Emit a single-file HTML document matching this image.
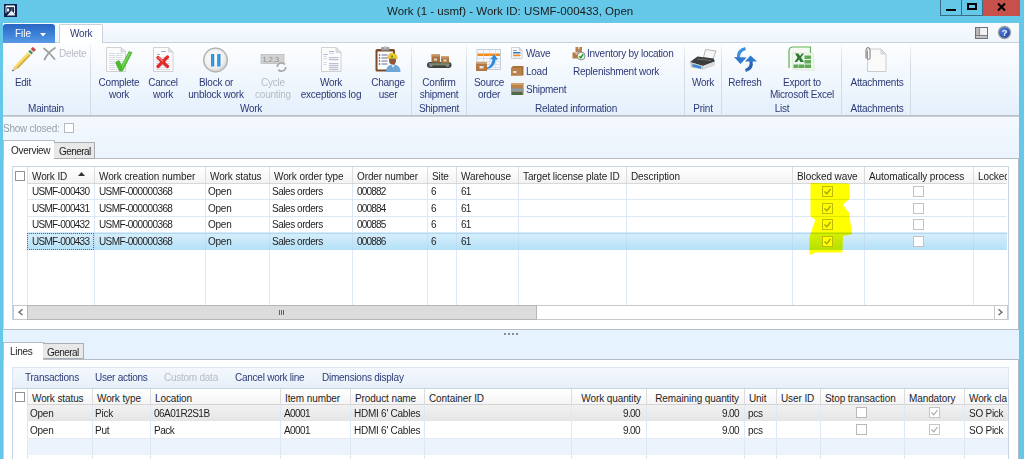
<!DOCTYPE html><html><head><meta charset="utf-8"><style>
html,body{margin:0;padding:0;}
body{width:1024px;height:459px;overflow:hidden;position:relative;background:#66c8e8;font-family:"Liberation Sans",sans-serif;font-size:10px;color:#1e1e1e;}
.t{position:absolute;white-space:nowrap;line-height:12px;letter-spacing:-0.25px;}
.rb{color:#2c3a78;}
.dis{color:#b8bcc4;}
.num{letter-spacing:-0.8px;}
svg{position:absolute;overflow:visible;}
</style></head><body>
<svg style="left:4px;top:4px" width="13" height="13" viewBox="0 0 13 13"><rect x="0" y="0" width="13" height="13" fill="#0e2150"/><path d="M2 9 V2 H10.5 V9" stroke="#dfe6ee" stroke-width="1" fill="none"/><rect x="2" y="1.8" width="8.8" height="1.4" fill="#f4f4f4"/><rect x="3" y="4.5" width="2.2" height="3" fill="#f0f4f8"/><rect x="6.8" y="4.5" width="2" height="2" fill="#fff" opacity="0.3"/><path d="M3 11.5 L7.5 6.5 L10.5 9.5 L11 11.5 Z" fill="#e8eef4"/></svg>
<div class="t" style="left:387px;top:4px;font-size:11.5px;letter-spacing:0;color:#1b1b1b;line-height:14px">Work (1 - usmf) - Work ID: USMF-000433, Open</div>
<div style="position:absolute;left:940px;top:0px;width:22px;height:16px;box-sizing:border-box;border:1px solid #3a6e86;border-top:none;background:#66c8e8"></div>
<div style="position:absolute;left:946px;top:9px;width:10px;height:2px;background:#000"></div>
<div style="position:absolute;left:962px;top:0px;width:21px;height:16px;box-sizing:border-box;border:1px solid #3a6e86;border-top:none;border-left:none;background:#66c8e8"></div>
<div style="position:absolute;left:967px;top:3px;width:10px;height:7px;box-sizing:border-box;border:2px solid #000"></div>
<div style="position:absolute;left:983px;top:0px;width:37px;height:16px;background:#c7504a"></div>
<svg style="left:997px;top:3px" width="9" height="8" viewBox="0 0 9 8"><path d="M1 0.5 L8 7.5 M8 0.5 L1 7.5" stroke="#000" stroke-width="2"/></svg>
<div style="position:absolute;left:3px;top:23px;width:1016px;height:436px;background:#e6f2fd"></div>
<div style="position:absolute;left:3px;top:23px;width:1016px;height:19px;background:linear-gradient(#f8fbff,#eef5fc)"></div>
<div style="position:absolute;left:3px;top:42px;width:1016px;height:1px;background:#c9d1da"></div>
<div style="position:absolute;left:3px;top:24px;width:52px;height:19px;background:linear-gradient(#2a66c2,#3a7fd6 50%,#5a9ae6);border-radius:3px 3px 0 0"></div>
<div class="t" style="left:15px;top:28px;color:#fff;font-size:10px;letter-spacing:0">File</div>
<svg style="left:40px;top:33px" width="6" height="3.5" viewBox="0 0 6 3.5"><path d="M0 0 L6 0 L3 3.5 Z" fill="#fff"/></svg>
<div style="position:absolute;left:59px;top:24px;width:44px;height:20px;box-sizing:border-box;background:#fff;border:1px solid #c9d1da;border-bottom:none;border-radius:2px 2px 0 0"></div>
<div class="t" style="left:70px;top:28px;font-size:10px;letter-spacing:-0.2px;color:#2c3a78">Work</div>
<svg style="left:0;top:0" width="1024" height="459"><rect x="975.5" y="27.5" width="12" height="11" fill="#f2f2f2" stroke="#6e7276" stroke-width="1"/><rect x="976" y="28" width="3" height="7" fill="#b8b8b8"/><rect x="979" y="28" width="0.8" height="7" fill="#6e7276"/><rect x="976" y="35" width="11" height="0.9" fill="#6e7276"/><rect x="976" y="36" width="11" height="2" fill="#c4c4c4"/></svg>
<svg style="left:998px;top:26px" width="13" height="13" viewBox="0 0 13 13"><defs><radialGradient id="hg" cx="0.4" cy="0.35" r="0.7"><stop offset="0" stop-color="#5a8ae8"/><stop offset="1" stop-color="#1a3a9a"/></radialGradient></defs><circle cx="6.5" cy="6.5" r="6" fill="url(#hg)" stroke="#9a9ea4" stroke-width="1.3"/><text x="6.6" y="10" font-size="9.5" font-weight="bold" text-anchor="middle" fill="#f0f4ff" font-family="Liberation Sans">?</text></svg>
<div style="position:absolute;left:3px;top:43px;width:1016px;height:72px;background:linear-gradient(#fdfeff,#f3f8fd 40%,#e4f0fc)"></div>
<div style="position:absolute;left:3px;top:115px;width:1016px;height:2px;background:linear-gradient(#b4b9be,#cfd5db)"></div>
<div style="position:absolute;left:90px;top:44px;width:1px;height:71px;background:linear-gradient(rgba(210,220,230,0.2),#d3dbe4 30%,#d3dbe4)"></div>
<div style="position:absolute;left:411px;top:44px;width:1px;height:71px;background:linear-gradient(rgba(210,220,230,0.2),#d3dbe4 30%,#d3dbe4)"></div>
<div style="position:absolute;left:466px;top:44px;width:1px;height:71px;background:linear-gradient(rgba(210,220,230,0.2),#d3dbe4 30%,#d3dbe4)"></div>
<div style="position:absolute;left:684px;top:44px;width:1px;height:71px;background:linear-gradient(rgba(210,220,230,0.2),#d3dbe4 30%,#d3dbe4)"></div>
<div style="position:absolute;left:721px;top:44px;width:1px;height:71px;background:linear-gradient(rgba(210,220,230,0.2),#d3dbe4 30%,#d3dbe4)"></div>
<div style="position:absolute;left:841px;top:44px;width:1px;height:71px;background:linear-gradient(rgba(210,220,230,0.2),#d3dbe4 30%,#d3dbe4)"></div>
<div style="position:absolute;left:910px;top:44px;width:1px;height:71px;background:linear-gradient(rgba(210,220,230,0.2),#d3dbe4 30%,#d3dbe4)"></div>
<div class="t rb" style="left:-77px;top:77px;width:200px;text-align:center">Edit</div>
<div class="t" style="left:59px;top:48px;color:#b8bcc4">Delete</div>
<div class="t rb" style="left:-54px;top:103px;width:200px;text-align:center">Maintain</div>
<div class="t rb" style="left:19px;top:77px;width:200px;text-align:center">Complete</div>
<div class="t rb" style="left:19px;top:89px;width:200px;text-align:center">work</div>
<div class="t rb" style="left:63px;top:77px;width:200px;text-align:center">Cancel</div>
<div class="t rb" style="left:63px;top:89px;width:200px;text-align:center">work</div>
<div class="t rb" style="left:116px;top:77px;width:200px;text-align:center">Block or</div>
<div class="t rb" style="left:116px;top:89px;width:200px;text-align:center">unblock work</div>
<div class="t dis" style="left:173px;top:77px;width:200px;text-align:center">Cycle</div>
<div class="t dis" style="left:173px;top:89px;width:200px;text-align:center">counting</div>
<div class="t rb" style="left:231px;top:77px;width:200px;text-align:center">Work</div>
<div class="t rb" style="left:231px;top:89px;width:200px;text-align:center">exceptions log</div>
<div class="t rb" style="left:288px;top:77px;width:200px;text-align:center">Change</div>
<div class="t rb" style="left:288px;top:89px;width:200px;text-align:center">user</div>
<div class="t rb" style="left:151px;top:103px;width:200px;text-align:center">Work</div>
<div class="t rb" style="left:339px;top:77px;width:200px;text-align:center">Confirm</div>
<div class="t rb" style="left:339px;top:89px;width:200px;text-align:center">shipment</div>
<div class="t rb" style="left:339px;top:103px;width:200px;text-align:center">Shipment</div>
<div class="t rb" style="left:389px;top:77px;width:200px;text-align:center">Source</div>
<div class="t rb" style="left:389px;top:89px;width:200px;text-align:center">order</div>
<div class="t" style="left:526px;top:48px;color:#2c3a78">Wave</div>
<div class="t" style="left:526px;top:66px;color:#2c3a78">Load</div>
<div class="t" style="left:526px;top:84px;color:#2c3a78">Shipment</div>
<div class="t" style="left:587px;top:48px;color:#2c3a78">Inventory by location</div>
<div class="t" style="left:573px;top:66px;color:#2c3a78">Replenishment work</div>
<div class="t rb" style="left:476px;top:103px;width:200px;text-align:center">Related information</div>
<div class="t rb" style="left:603px;top:77px;width:200px;text-align:center">Work</div>
<div class="t rb" style="left:603px;top:103px;width:200px;text-align:center">Print</div>
<div class="t rb" style="left:645px;top:77px;width:200px;text-align:center">Refresh</div>
<div class="t rb" style="left:702px;top:77px;width:200px;text-align:center">Export to</div>
<div class="t rb" style="left:702px;top:89px;width:200px;text-align:center">Microsoft Excel</div>
<div class="t rb" style="left:682px;top:103px;width:200px;text-align:center">List</div>
<div class="t rb" style="left:777px;top:77px;width:200px;text-align:center">Attachments</div>
<div class="t rb" style="left:777px;top:103px;width:200px;text-align:center">Attachments</div>
<svg style="left:0;top:0" width="1024" height="459" viewBox="0 0 1024 459"><g transform="translate(12,71.5) rotate(-46) scale(0.93,0.9)">
 <path d="M0 0 L6.5 -2.4 L6.5 2.4 Z" fill="#e9c98f"/>
 <path d="M0 0 L2.2 -0.8 L2.2 0.8 Z" fill="#3a3a3a"/>
 <rect x="6.5" y="-2.4" width="20" height="4.8" fill="#f3d762"/>
 <rect x="6.5" y="0.6" width="20" height="1.8" fill="#d9ab40"/>
 <rect x="6.5" y="-2.4" width="20" height="0.8" fill="#fff3b0"/>
 <rect x="26.5" y="-2.4" width="1.2" height="4.8" fill="#eee"/>
 <rect x="27.7" y="-2.4" width="2.6" height="4.8" fill="#3f8f48"/>
 <rect x="30.3" y="-2.4" width="1" height="4.8" fill="#eee"/>
 <rect x="31.3" y="-2.5" width="3.4" height="5" rx="1.2" fill="#c9474a"/>
</g><path d="M44 48.5 Q49.5 52.5 54.5 59" stroke="#a0a0a0" stroke-width="1.8" fill="none" stroke-linecap="round"/><path d="M55 48 Q48.5 51.5 44.5 59.5" stroke="#a0a0a0" stroke-width="1.8" fill="none" stroke-linecap="round"/><path d="M107.5 49.0 L121.0 48.0 L125.5 52.0 L125.5 72.0 L107.5 72.0 Z" fill="#d8d8d8" opacity="0.6"/><path d="M106.5 47.5 L121.0 47.5 L125.5 52.0 L125.5 71.5 L106.5 71.5 Z" fill="#fbfbfb" stroke="#c6c6c6" stroke-width="0.8"/><path d="M121.0 47.5 L121.0 52.0 L125.5 52.0 Z" fill="#e2e2e2" stroke="#c6c6c6" stroke-width="0.6"/><rect x="109" y="53" width="6" height="0.9" fill="#d6dae2"/><rect x="116" y="53" width="7" height="0.9" fill="#d6dae2"/><rect x="109" y="55" width="6" height="0.9" fill="#d6dae2"/><rect x="116" y="55" width="7" height="0.9" fill="#d6dae2"/><rect x="109" y="57" width="6" height="0.9" fill="#d6dae2"/><rect x="116" y="57" width="7" height="0.9" fill="#d6dae2"/><rect x="109" y="59" width="6" height="0.9" fill="#d6dae2"/><rect x="116" y="59" width="7" height="0.9" fill="#d6dae2"/><rect x="109" y="61" width="6" height="0.9" fill="#d6dae2"/><rect x="116" y="61" width="7" height="0.9" fill="#d6dae2"/><rect x="109" y="63" width="6" height="0.9" fill="#d6dae2"/><rect x="116" y="63" width="7" height="0.9" fill="#d6dae2"/><rect x="109" y="65" width="6" height="0.9" fill="#d6dae2"/><rect x="116" y="65" width="7" height="0.9" fill="#d6dae2"/><rect x="109" y="67" width="6" height="0.9" fill="#d6dae2"/><rect x="116" y="67" width="7" height="0.9" fill="#d6dae2"/><rect x="109" y="69" width="6" height="0.9" fill="#d6dae2"/><rect x="116" y="69" width="7" height="0.9" fill="#d6dae2"/><path d="M115.5 62.5 L119 60.5 L121.5 65.5 L129 51.5 L132 52.5 L122.5 71 L119.5 71 Z" fill="#4cbb2c" stroke="#2f9a1c" stroke-width="0.5"/><path d="M121.8 66 L129.2 52.3 L130.8 52.8 L122.3 68.5 Z" fill="#8fe06a" opacity="0.7"/><path d="M154.5 49.0 L168.5 48.0 L173.0 52.0 L173.0 72.0 L154.5 72.0 Z" fill="#d8d8d8" opacity="0.6"/><path d="M153.5 47.5 L168.5 47.5 L173.0 52.0 L173.0 71.5 L153.5 71.5 Z" fill="#fbfbfb" stroke="#c6c6c6" stroke-width="0.8"/><path d="M168.5 47.5 L168.5 52.0 L173.0 52.0 Z" fill="#e2e2e2" stroke="#c6c6c6" stroke-width="0.6"/><rect x="161" y="51" width="5" height="1" fill="#9aaedc"/><rect x="157" y="54" width="3" height="1" fill="#9aaedc"/><rect x="156" y="57" width="14" height="0.8" fill="#d0d6e0"/><rect x="156" y="59" width="14" height="0.8" fill="#d0d6e0"/><rect x="156" y="61" width="14" height="0.8" fill="#d0d6e0"/><rect x="156" y="63" width="14" height="0.8" fill="#d0d6e0"/><rect x="156" y="65" width="14" height="0.8" fill="#d0d6e0"/><rect x="156" y="67" width="14" height="0.8" fill="#d0d6e0"/><rect x="156" y="69" width="14" height="0.8" fill="#d0d6e0"/><path d="M158 57.5 L167.5 66.5 M167.5 57 L158 66.5" stroke="#e12b2b" stroke-width="3.2" stroke-linecap="round"/><path d="M158.5 57.5 L162.5 61" stroke="#f47a7a" stroke-width="1.2" stroke-linecap="round"/><defs><radialGradient id="gb" cx="0.45" cy="0.4" r="0.6"><stop offset="0" stop-color="#ffffff"/><stop offset="0.75" stop-color="#f0f0f0"/><stop offset="1" stop-color="#d4d4d4"/></radialGradient><linearGradient id="bl" x1="0" y1="0" x2="1" y2="0"><stop offset="0" stop-color="#1f7fd0"/><stop offset="0.5" stop-color="#3aa8f0"/><stop offset="1" stop-color="#1a6ec0"/></linearGradient></defs><circle cx="215.5" cy="60" r="12.5" fill="#c4c4c4"/><circle cx="215.5" cy="60" r="11" fill="url(#gb)"/><circle cx="215.5" cy="60" r="12" fill="none" stroke="#ababab" stroke-width="0.8"/><rect x="211" y="54" width="3.2" height="12.5" fill="url(#bl)"/><rect x="217.2" y="54" width="3.2" height="12.5" fill="url(#bl)"/><rect x="261" y="54.5" width="23" height="9" fill="#d2d2d2" stroke="#bdbdbd" stroke-width="0.8"/><text x="262.5" y="62" font-size="7.5" fill="#8a8a8a" font-family="Liberation Sans">1,2,3</text><circle cx="281.5" cy="67" r="4.2" fill="none" stroke="#a9a9a9" stroke-width="1.8" stroke-dasharray="10 3"/><path d="M322.5 49.0 L336.0 48.0 L341.0 52.5 L341.0 72.0 L322.5 72.0 Z" fill="#d8d8d8" opacity="0.6"/><path d="M321.5 47.5 L336.0 47.5 L341.0 52.5 L341.0 71.5 L321.5 71.5 Z" fill="#fbfbfb" stroke="#c6c6c6" stroke-width="0.8"/><path d="M336.0 47.5 L336.0 52.5 L341.0 52.5 Z" fill="#e2e2e2" stroke="#c6c6c6" stroke-width="0.6"/><rect x="329" y="51" width="5" height="1" fill="#a8b4d8"/><rect x="329" y="53" width="5" height="0.8" fill="#c8cce0"/><rect x="323.5" y="54" width="4" height="1" fill="#a8b4d8"/><rect x="323.5" y="56" width="3" height="0.8" fill="#c8cce0"/><rect x="323.5" y="58" width="3" height="0.8" fill="#c8cce0"/><rect x="323.5" y="62" width="3" height="0.8" fill="#c8cce0"/><rect x="323.5" y="64" width="3" height="0.8" fill="#c8cce0"/><rect x="329" y="57" width="9.5" height="1.2" fill="#b8c0d4"/><rect x="329" y="59" width="9.5" height="1.2" fill="#b8c0d4"/><rect x="329" y="63" width="9.5" height="1.2" fill="#b8c0d4"/><rect x="329" y="65" width="9.5" height="1.2" fill="#b8c0d4"/><rect x="329" y="67" width="9.5" height="1.2" fill="#b8c0d4"/><rect x="329" y="69" width="9.5" height="1.2" fill="#b8c0d4"/><rect x="375.5" y="49" width="19.5" height="22.5" rx="1.5" fill="#7a4a28"/><rect x="377.5" y="51.5" width="15.5" height="18" fill="#fdfdfd"/><rect x="381" y="47" width="8.5" height="3.5" rx="1" fill="#9c9c9c"/><circle cx="385.3" cy="47.5" r="1.5" fill="#bdbdbd"/><circle cx="379.5" cy="55" r="0.8" fill="#444"/><rect x="381.5" y="54.5" width="6" height="1" fill="#6a6a9a"/><circle cx="379.5" cy="58" r="0.8" fill="#444"/><rect x="381.5" y="57.5" width="6" height="1" fill="#6a6a9a"/><circle cx="379.5" cy="61" r="0.8" fill="#444"/><rect x="381.5" y="60.5" width="6" height="1" fill="#6a6a9a"/><circle cx="379.5" cy="64" r="0.8" fill="#444"/><rect x="381.5" y="63.5" width="6" height="1" fill="#6a6a9a"/><path d="M386 72 Q386 64.5 393 64.5 Q400.5 64.5 400.5 72 Z" fill="#6ea6d8"/><path d="M391 64.5 L393 68 L395 64.5 Z" fill="#dde8f0"/><ellipse cx="392.5" cy="60.5" rx="3.5" ry="4" fill="#8b5a3a"/><path d="M387.8 58.5 Q388 53.2 392.5 53.2 Q397 53.2 397.2 58.5 Z" fill="#f2cc2a" stroke="#c9a010" stroke-width="0.5"/><circle cx="392" cy="56.5" r="1.2" fill="#5aa040"/><rect x="427" y="62" width="24.5" height="6" rx="3" fill="#3e4440"/><rect x="429" y="63.2" width="20.5" height="2.2" fill="#7a8a6a"/><circle cx="431" cy="65.5" r="1.6" fill="#888"/><circle cx="447.5" cy="65.5" r="1.6" fill="#888"/><rect x="431.5" y="54.5" width="8.5" height="8" fill="#a8743e"/><rect x="431.5" y="54.5" width="8.5" height="2" fill="#c8925a"/><rect x="434" y="58.5" width="3" height="2" fill="#e0d8c8"/><rect x="441" y="56.5" width="8" height="6.5" fill="#a8743e"/><rect x="441" y="56.5" width="8" height="2" fill="#c8925a"/><rect x="443.5" y="59.5" width="3" height="2" fill="#e0d8c8"/><rect x="477" y="49.5" width="23.5" height="20" fill="#f4f6fa" stroke="#b8c4d4" stroke-width="0.8"/><rect x="477.5" y="53.5" width="22.5" height="2.5" fill="#f08a1c"/><rect x="478" y="58" width="22" height="0.6" fill="#c8d4e4"/><rect x="478" y="61" width="22" height="0.6" fill="#c8d4e4"/><rect x="478" y="64" width="22" height="0.6" fill="#c8d4e4"/><rect x="478" y="67" width="22" height="0.6" fill="#c8d4e4"/><rect x="483" y="50" width="0.6" height="19" fill="#c8d4e4"/><rect x="489" y="50" width="0.6" height="19" fill="#c8d4e4"/><rect x="495" y="50" width="0.6" height="19" fill="#c8d4e4"/><path d="M486 68 Q492 66 492.5 59 L490 59.5 L494.5 54.5 L498 60 L495.5 59.5 Q495 68 486 69.5 Z" fill="#2a8ae0"/><rect x="476" y="62" width="11" height="9" fill="#b27a42"/><rect x="476" y="62" width="11" height="2" fill="#caa070"/><rect x="479.5" y="66" width="4" height="2.5" fill="#e6e2da"/><path d="M512.5 49.0 L519.0 48.0 L522.0 50.5 L522.0 59.0 L512.5 59.0 Z" fill="#d8d8d8" opacity="0.6"/><path d="M511.5 47.5 L519.0 47.5 L522.0 50.5 L522.0 58.5 L511.5 58.5 Z" fill="#fbfbfb" stroke="#c6c6c6" stroke-width="0.8"/><path d="M519.0 47.5 L519.0 50.5 L522.0 50.5 Z" fill="#e2e2e2" stroke="#c6c6c6" stroke-width="0.6"/><rect x="513" y="52" width="7.5" height="1.5" fill="#3a7ad0"/><rect x="513" y="54.5" width="7.5" height="1.5" fill="#f0902a"/><rect x="513" y="50" width="4" height="1" fill="#8aa8d8"/><rect x="513" y="56.5" width="7" height="0.8" fill="#c8c8c8"/><path d="M511 68 L513 66 L523.5 66 L523.5 75.5 L511 75.5 Z" fill="#a8703a"/><rect x="511" y="68" width="10.5" height="7.5" fill="#b8824a"/><rect x="513" y="71" width="3.5" height="2" fill="#e6e0d4"/><rect x="511" y="83" width="12.5" height="12" fill="#b8824a"/><rect x="511" y="83" width="12.5" height="2" fill="#d0a06a"/><rect x="511" y="88.5" width="12.5" height="3" fill="#8a9aa8"/><rect x="512" y="92" width="10.5" height="3" fill="#4a6a48"/><rect x="575.5" y="47" width="6.5" height="5.2" fill="#b8824a"/><rect x="578" y="47" width="1.5" height="2" fill="#e6d8c0"/><rect x="577.5" y="50" width="2.5" height="1" fill="#8a9aa8"/><rect x="572.5" y="52.5" width="8.5" height="6" fill="#b27a42"/><rect x="575.5" y="52.5" width="1.5" height="2" fill="#e6d8c0"/><circle cx="581.2" cy="56" r="3.9" fill="#f4f4f4" stroke="#8a8a8a" stroke-width="1"/><path d="M579.3 56.2 L580.8 57.8 L583.2 54.2" stroke="#22aa22" stroke-width="1.6" fill="none"/><path d="M703.5 57.5 L705.5 49.5 L716 51 L713 59 Z" fill="#f7f7f7" stroke="#9a9a9a" stroke-width="0.7"/><path d="M690 62 L697.5 56.5 L713.5 58.5 L715 61.5 L703 66 Z" fill="#3c3c3c"/><path d="M697 59 L711 60.5" stroke="#777" stroke-width="0.8"/><path d="M690 62 L703 66 L715 61.5 L714.5 65.5 L703 69.5 L691 67.5 Z" fill="#c4c4c4"/><path d="M703 66 L715 61.5 L714.5 65.5 L703 69.5 Z" fill="#dcdcdc"/><path d="M692.5 64 L701 66.3 L701 68.8 L692.5 66.8 Z" fill="#3a8ad8"/><path d="M745.5 48.5 Q738 50.5 738.5 57.5" stroke="#3b8fdc" stroke-width="3.2" fill="none"/><path d="M734 57 L746.5 57.5 L740.5 64 Z" fill="#2f78cc"/><path d="M745.5 70.5 Q752.5 68.5 751 61" stroke="#2a62b8" stroke-width="3.2" fill="none"/><path d="M745 61.5 L750.5 55.5 L757 61.5 Z" fill="#2f78cc"/><path d="M789 68 L789 51 Q789 47 793 47 L810.5 47 L810.5 53" stroke="#62b454" stroke-width="1.2" fill="#f4faf2"/><path d="M792.5 52.5 L813.5 53.5 L814.5 70.5 L792.5 69.5 Z" fill="#eef6ec" stroke="#d8e4d8" stroke-width="0.6"/><rect x="804.5" y="55.5" width="6.5" height="3.5" fill="#4fa246" opacity="0.9"/><rect x="804.5" y="60" width="6.5" height="3.5" fill="#4fa246" opacity="0.9"/><rect x="804.5" y="64.5" width="6.5" height="3.5" fill="#4fa246" opacity="0.9"/><rect x="793.5" y="64.5" width="5" height="3.5" fill="#4fa246" opacity="0.9"/><rect x="799" y="64.5" width="5" height="3.5" fill="#4fa246" opacity="0.9"/><path d="M795 53.5 L798.5 53.5 L800 56 L802 53.5 L804 53.5 L801 57.5 L804 62 L800.5 62 L799 59.5 L797 62 L794.5 62 L797.5 57.5 Z" fill="#2a7a30"/><path d="M868.5 50.5 L881.0 49.5 L886.0 54 L886.0 72.0 L868.5 72.0 Z" fill="#d8d8d8" opacity="0.6"/><path d="M867.5 49 L881.0 49 L886.0 54 L886.0 71.5 L867.5 71.5 Z" fill="#fafafa" stroke="#c2c2c2" stroke-width="0.8"/><path d="M881.0 49 L881.0 54 L886.0 54 Z" fill="#e2e2e2" stroke="#c2c2c2" stroke-width="0.6"/><path d="M866 58.5 L866 50 Q866 47.5 868 47.5 Q870 47.5 870 50 L870 58 Q870 59.5 868.5 59.5 Q867.2 59.5 867.2 58 L867.2 51" stroke="#7a7a7a" stroke-width="1" fill="none"/></svg>
<div style="position:absolute;left:3px;top:117px;width:1016px;height:41px;background:linear-gradient(#f3f8fd,#ebf4fd)"></div>
<div class="t" style="left:3px;top:123px;color:#9aa0a8">Show closed:</div>
<div style="position:absolute;left:64px;top:123px;width:10px;height:10px;box-sizing:border-box;border:1px solid #b4b9bf;background:#fff"></div>
<div style="position:absolute;left:3px;top:158px;width:1016px;height:172px;box-sizing:border-box;background:#fff;border:1px solid #b6bcc4;border-left-color:#c8ced4"></div>
<div style="position:absolute;left:3px;top:140px;width:52px;height:19px;box-sizing:border-box;background:#fff;border:1px solid #b6bcc4;border-bottom:none"></div>
<div class="t" style="left:11px;top:145px;letter-spacing:-0.3px">Overview</div>
<div style="position:absolute;left:54px;top:142px;width:41px;height:17px;box-sizing:border-box;background:#e8e8e8;border:1px solid #a9aeb4;border-left:none"></div>
<div class="t" style="left:59px;top:146px;letter-spacing:-0.55px">General</div>
<div style="position:absolute;left:12px;top:166px;width:997px;height:154px;box-sizing:border-box;border:1px solid #c9d5e2;background:#fff"></div>
<div style="position:absolute;left:27px;top:167px;width:980px;height:16px;background:linear-gradient(#ffffff,#f3f3f3);border-bottom:1px solid #d8d8d8"></div>
<div style="position:absolute;left:15px;top:171px;width:10px;height:10px;box-sizing:border-box;border:1px solid #8e9399;background:#fff"></div>
<div style="position:absolute;left:27px;top:233px;width:980px;height:17px;background:linear-gradient(#d6edfa,#b4e1f8);border-top:1px solid #abdcf6;box-sizing:border-box"></div>
<div style="position:absolute;left:27px;top:167px;width:1px;height:16px;background:#dcdcdc"></div>
<div style="position:absolute;left:27px;top:183px;width:1px;height:122px;background:rgba(190,210,235,0.5)"></div>
<div style="position:absolute;left:94px;top:167px;width:1px;height:16px;background:#dcdcdc"></div>
<div style="position:absolute;left:94px;top:183px;width:1px;height:122px;background:rgba(190,210,235,0.5)"></div>
<div style="position:absolute;left:205px;top:167px;width:1px;height:16px;background:#dcdcdc"></div>
<div style="position:absolute;left:205px;top:183px;width:1px;height:122px;background:rgba(190,210,235,0.5)"></div>
<div style="position:absolute;left:269px;top:167px;width:1px;height:16px;background:#dcdcdc"></div>
<div style="position:absolute;left:269px;top:183px;width:1px;height:122px;background:rgba(190,210,235,0.5)"></div>
<div style="position:absolute;left:352px;top:167px;width:1px;height:16px;background:#dcdcdc"></div>
<div style="position:absolute;left:352px;top:183px;width:1px;height:122px;background:rgba(190,210,235,0.5)"></div>
<div style="position:absolute;left:427px;top:167px;width:1px;height:16px;background:#dcdcdc"></div>
<div style="position:absolute;left:427px;top:183px;width:1px;height:122px;background:rgba(190,210,235,0.5)"></div>
<div style="position:absolute;left:456px;top:167px;width:1px;height:16px;background:#dcdcdc"></div>
<div style="position:absolute;left:456px;top:183px;width:1px;height:122px;background:rgba(190,210,235,0.5)"></div>
<div style="position:absolute;left:518px;top:167px;width:1px;height:16px;background:#dcdcdc"></div>
<div style="position:absolute;left:518px;top:183px;width:1px;height:122px;background:rgba(190,210,235,0.5)"></div>
<div style="position:absolute;left:626px;top:167px;width:1px;height:16px;background:#dcdcdc"></div>
<div style="position:absolute;left:626px;top:183px;width:1px;height:122px;background:rgba(190,210,235,0.5)"></div>
<div style="position:absolute;left:792px;top:167px;width:1px;height:16px;background:#dcdcdc"></div>
<div style="position:absolute;left:792px;top:183px;width:1px;height:122px;background:rgba(190,210,235,0.5)"></div>
<div style="position:absolute;left:864px;top:167px;width:1px;height:16px;background:#dcdcdc"></div>
<div style="position:absolute;left:864px;top:183px;width:1px;height:122px;background:rgba(190,210,235,0.5)"></div>
<div style="position:absolute;left:973px;top:167px;width:1px;height:16px;background:#dcdcdc"></div>
<div style="position:absolute;left:973px;top:183px;width:1px;height:122px;background:rgba(190,210,235,0.5)"></div>
<div class="t" style="left:32px;top:171px;letter-spacing:-0.1px">Work ID</div>
<div class="t" style="left:99px;top:171px;letter-spacing:-0.1px">Work creation number</div>
<div class="t" style="left:210px;top:171px;letter-spacing:-0.1px">Work status</div>
<div class="t" style="left:274px;top:171px;letter-spacing:-0.1px">Work order type</div>
<div class="t" style="left:357px;top:171px;letter-spacing:-0.1px">Order number</div>
<div class="t" style="left:432px;top:171px;letter-spacing:-0.1px">Site</div>
<div class="t" style="left:461px;top:171px;letter-spacing:-0.1px">Warehouse</div>
<div class="t" style="left:523px;top:171px;letter-spacing:-0.1px">Target license plate ID</div>
<div class="t" style="left:631px;top:171px;letter-spacing:-0.1px">Description</div>
<div class="t" style="left:797px;top:171px;letter-spacing:-0.1px">Blocked wave</div>
<div class="t" style="left:869px;top:171px;letter-spacing:-0.1px">Automatically process</div>
<div class="t" style="left:978px;top:171px;letter-spacing:-0.1px;width:29px;overflow:hidden">Locked</div>
<svg style="left:78px;top:172px" width="7" height="4" viewBox="0 0 7 4"><path d="M0 4 L7 4 L3.5 0 Z" fill="#333"/></svg>
<div style="position:absolute;left:27px;top:199px;width:980px;height:1px;background:#dde8f5"></div>
<div class="t" style="left:32px;top:186px;letter-spacing:-0.7px">USMF-000430</div>
<div class="t" style="left:208px;top:186px;">Open</div>
<div class="t" style="left:272px;top:186px;letter-spacing:-0.45px">Sales orders</div>
<div class="t" style="left:357px;top:186px;letter-spacing:-0.8px">000882</div>
<div class="t" style="left:431px;top:186px;">6</div>
<div class="t" style="left:461px;top:186px;letter-spacing:-0.8px">61</div>
<div class="t" style="left:99px;top:186px;letter-spacing:-0.6px">USMF-000000368</div>
<div style="position:absolute;left:822px;top:186px;width:11px;height:11px;box-sizing:border-box;border:1px solid #bcbcbc;background:#fff"></div>
<svg style="left:824px;top:188px" width="7" height="7" viewBox="0 0 7 7"><path d="M0.5 3.5 L2.8 5.8 L6.5 1" stroke="#a0a0a0" stroke-width="1.3" fill="none"/></svg>
<div style="position:absolute;left:913px;top:186px;width:11px;height:11px;box-sizing:border-box;border:1px solid #c2c2c2;background:#fff"></div>
<div style="position:absolute;left:27px;top:216px;width:980px;height:1px;background:#dde8f5"></div>
<div class="t" style="left:32px;top:203px;letter-spacing:-0.7px">USMF-000431</div>
<div class="t" style="left:208px;top:203px;">Open</div>
<div class="t" style="left:272px;top:203px;letter-spacing:-0.45px">Sales orders</div>
<div class="t" style="left:357px;top:203px;letter-spacing:-0.8px">000884</div>
<div class="t" style="left:431px;top:203px;">6</div>
<div class="t" style="left:461px;top:203px;letter-spacing:-0.8px">61</div>
<div class="t" style="left:99px;top:203px;letter-spacing:-0.6px">USMF-000000368</div>
<div style="position:absolute;left:822px;top:203px;width:11px;height:11px;box-sizing:border-box;border:1px solid #bcbcbc;background:#fff"></div>
<svg style="left:824px;top:205px" width="7" height="7" viewBox="0 0 7 7"><path d="M0.5 3.5 L2.8 5.8 L6.5 1" stroke="#a0a0a0" stroke-width="1.3" fill="none"/></svg>
<div style="position:absolute;left:913px;top:203px;width:11px;height:11px;box-sizing:border-box;border:1px solid #c2c2c2;background:#fff"></div>
<div style="position:absolute;left:27px;top:232px;width:980px;height:1px;background:#dde8f5"></div>
<div class="t" style="left:32px;top:219px;letter-spacing:-0.7px">USMF-000432</div>
<div class="t" style="left:208px;top:219px;">Open</div>
<div class="t" style="left:272px;top:219px;letter-spacing:-0.45px">Sales orders</div>
<div class="t" style="left:357px;top:219px;letter-spacing:-0.8px">000885</div>
<div class="t" style="left:431px;top:219px;">6</div>
<div class="t" style="left:461px;top:219px;letter-spacing:-0.8px">61</div>
<div class="t" style="left:99px;top:219px;letter-spacing:-0.6px">USMF-000000368</div>
<div style="position:absolute;left:822px;top:219px;width:11px;height:11px;box-sizing:border-box;border:1px solid #bcbcbc;background:#fff"></div>
<svg style="left:824px;top:221px" width="7" height="7" viewBox="0 0 7 7"><path d="M0.5 3.5 L2.8 5.8 L6.5 1" stroke="#a0a0a0" stroke-width="1.3" fill="none"/></svg>
<div style="position:absolute;left:913px;top:219px;width:11px;height:11px;box-sizing:border-box;border:1px solid #c2c2c2;background:#fff"></div>
<div style="position:absolute;left:27px;top:233px;width:67px;height:17px;box-sizing:border-box;border:1px dotted #666"></div>
<div class="t" style="left:32px;top:236px;letter-spacing:-0.7px">USMF-000433</div>
<div class="t" style="left:208px;top:236px;">Open</div>
<div class="t" style="left:272px;top:236px;letter-spacing:-0.45px">Sales orders</div>
<div class="t" style="left:357px;top:236px;letter-spacing:-0.8px">000886</div>
<div class="t" style="left:431px;top:236px;">6</div>
<div class="t" style="left:461px;top:236px;letter-spacing:-0.8px">61</div>
<div class="t" style="left:99px;top:236px;letter-spacing:-0.6px">USMF-000000368</div>
<div style="position:absolute;left:822px;top:236px;width:11px;height:11px;box-sizing:border-box;border:1px solid #bcbcbc;background:#fff"></div>
<svg style="left:824px;top:238px" width="7" height="7" viewBox="0 0 7 7"><path d="M0.5 3.5 L2.8 5.8 L6.5 1" stroke="#a0a0a0" stroke-width="1.3" fill="none"/></svg>
<div style="position:absolute;left:913px;top:236px;width:11px;height:11px;box-sizing:border-box;border:1px solid #c2c2c2;background:#fff"></div>
<div style="position:absolute;left:13px;top:305px;width:995px;height:15px;box-sizing:border-box;border:1px solid #c8c8c8;background:#fff"></div>
<div style="position:absolute;left:27px;top:305px;width:510px;height:15px;box-sizing:border-box;border:1px solid #b6b6b6;background:#dcdcdc"></div>
<svg style="left:0;top:0" width="1024" height="459"><path d="M22.5 309.3 L19 312.2 L22.5 315" stroke="#666" stroke-width="1.3" fill="none"/><path d="M998.5 309.3 L1002 312.2 L998.5 315" stroke="#666" stroke-width="1.3" fill="none"/><path d="M279.5 310 V315 M281.5 310 V315 M283.5 310 V315" stroke="#555" stroke-width="0.9"/></svg>
<div style="position:absolute;left:994px;top:305px;width:1px;height:15px;background:#c8c8c8"></div>
<svg style="left:0;top:0;mix-blend-mode:multiply" width="1024" height="459" viewBox="0 0 1024 459"><path d="M811.5 184 L848 184.5 L849 198 L841.5 204.5 L848 213 L851 233.5 L842 235 L841.5 251.5 L815.5 251.5 L810.5 253.5 L810.5 237 L816.5 219.5 L811.5 216 Z" fill="#ffff00" stroke="#ffff00" stroke-width="2" stroke-linejoin="round"/></svg>
<div style="position:absolute;left:504px;top:333px;width:1.5px;height:1.5px;background:#8a8a8a"></div>
<div style="position:absolute;left:508px;top:333px;width:1.5px;height:1.5px;background:#8a8a8a"></div>
<div style="position:absolute;left:512px;top:333px;width:1.5px;height:1.5px;background:#8a8a8a"></div>
<div style="position:absolute;left:516px;top:333px;width:1.5px;height:1.5px;background:#8a8a8a"></div>
<div style="position:absolute;left:3px;top:359px;width:1016px;height:1px;background:#b6bcc4"></div>
<div style="position:absolute;left:3px;top:360px;width:1016px;height:99px;box-sizing:border-box;background:#fff;border-right:1px solid #b6bcc4;border-left:1px solid #c8ced4"></div>
<div style="position:absolute;left:3px;top:342px;width:41px;height:18px;box-sizing:border-box;background:#fff;border:1px solid #b6bcc4;border-bottom:none"></div>
<div class="t" style="left:10px;top:346px;letter-spacing:-0.3px">Lines</div>
<div style="position:absolute;left:43px;top:343px;width:41px;height:16px;box-sizing:border-box;background:#e8e8e8;border:1px solid #a9aeb4;border-left:none"></div>
<div class="t" style="left:47px;top:347px;letter-spacing:-0.55px">General</div>
<div style="position:absolute;left:12px;top:367px;width:997px;height:21px;box-sizing:border-box;background:linear-gradient(#f4f8fd,#e6eff9);border:1px solid #dde6f0;border-bottom:none"></div>
<div class="t" style="left:25px;top:372px;color:#2c3a78">Transactions</div>
<div class="t" style="left:95px;top:372px;color:#2c3a78">User actions</div>
<div class="t" style="left:164px;top:372px;color:#b8bcc4">Custom data</div>
<div class="t" style="left:235px;top:372px;color:#2c3a78">Cancel work line</div>
<div class="t" style="left:322px;top:372px;color:#2c3a78">Dimensions display</div>
<div style="position:absolute;left:12px;top:388px;width:997px;height:71px;box-sizing:border-box;border:1px solid #c9d5e2;border-bottom:none;background:#fff"></div>
<div style="position:absolute;left:27px;top:389px;width:981px;height:15px;background:linear-gradient(#ffffff,#f5f5f5);border-bottom:1px solid #d4d4d4"></div>
<div style="position:absolute;left:15px;top:392px;width:10px;height:10px;box-sizing:border-box;border:1px solid #8e9399;background:#fff"></div>
<div style="position:absolute;left:27px;top:389px;width:1px;height:16px;background:#dcdcdc"></div>
<div style="position:absolute;left:92px;top:389px;width:1px;height:16px;background:#dcdcdc"></div>
<div style="position:absolute;left:150px;top:389px;width:1px;height:16px;background:#dcdcdc"></div>
<div style="position:absolute;left:280px;top:389px;width:1px;height:16px;background:#dcdcdc"></div>
<div style="position:absolute;left:350px;top:389px;width:1px;height:16px;background:#dcdcdc"></div>
<div style="position:absolute;left:424px;top:389px;width:1px;height:16px;background:#dcdcdc"></div>
<div style="position:absolute;left:571px;top:389px;width:1px;height:16px;background:#dcdcdc"></div>
<div style="position:absolute;left:646px;top:389px;width:1px;height:16px;background:#dcdcdc"></div>
<div style="position:absolute;left:744px;top:389px;width:1px;height:16px;background:#dcdcdc"></div>
<div style="position:absolute;left:776px;top:389px;width:1px;height:16px;background:#dcdcdc"></div>
<div style="position:absolute;left:820px;top:389px;width:1px;height:16px;background:#dcdcdc"></div>
<div style="position:absolute;left:904px;top:389px;width:1px;height:16px;background:#dcdcdc"></div>
<div style="position:absolute;left:964px;top:389px;width:1px;height:16px;background:#dcdcdc"></div>
<div class="t" style="left:32px;top:393px;letter-spacing:-0.1px">Work status</div>
<div class="t" style="left:97px;top:393px;letter-spacing:-0.1px">Work type</div>
<div class="t" style="left:155px;top:393px;letter-spacing:-0.1px">Location</div>
<div class="t" style="left:285px;top:393px;letter-spacing:-0.1px">Item number</div>
<div class="t" style="left:355px;top:393px;letter-spacing:-0.1px">Product name</div>
<div class="t" style="left:429px;top:393px;letter-spacing:-0.1px">Container ID</div>
<div class="t" style="left:441px;top:393px;width:200px;text-align:right;letter-spacing:-0.1px">Work quantity</div>
<div class="t" style="left:539px;top:393px;width:200px;text-align:right;letter-spacing:-0.1px">Remaining quantity</div>
<div class="t" style="left:749px;top:393px;letter-spacing:-0.1px">Unit</div>
<div class="t" style="left:781px;top:393px;letter-spacing:-0.1px">User ID</div>
<div class="t" style="left:825px;top:393px;letter-spacing:-0.1px">Stop transaction</div>
<div class="t" style="left:909px;top:393px;letter-spacing:-0.1px">Mandatory</div>
<div class="t" style="left:969px;top:393px;width:38px;overflow:hidden;letter-spacing:-0.1px">Work class</div>
<div style="position:absolute;left:27px;top:405px;width:981px;height:16px;background:linear-gradient(#f1f1f1,#ebebeb 60%,#e4e4e4)"></div>
<div style="position:absolute;left:27px;top:421px;width:981px;height:17px;background:#fff"></div>
<div style="position:absolute;left:27px;top:438px;width:981px;height:17px;background:#edf3fc"></div>
<div style="position:absolute;left:27px;top:405px;width:1px;height:54px;background:#dde8f5"></div>
<div style="position:absolute;left:92px;top:405px;width:1px;height:54px;background:#dde8f5"></div>
<div style="position:absolute;left:150px;top:405px;width:1px;height:54px;background:#dde8f5"></div>
<div style="position:absolute;left:280px;top:405px;width:1px;height:54px;background:#dde8f5"></div>
<div style="position:absolute;left:350px;top:405px;width:1px;height:54px;background:#dde8f5"></div>
<div style="position:absolute;left:424px;top:405px;width:1px;height:54px;background:#dde8f5"></div>
<div style="position:absolute;left:571px;top:405px;width:1px;height:54px;background:#dde8f5"></div>
<div style="position:absolute;left:646px;top:405px;width:1px;height:54px;background:#dde8f5"></div>
<div style="position:absolute;left:744px;top:405px;width:1px;height:54px;background:#dde8f5"></div>
<div style="position:absolute;left:776px;top:405px;width:1px;height:54px;background:#dde8f5"></div>
<div style="position:absolute;left:820px;top:405px;width:1px;height:54px;background:#dde8f5"></div>
<div style="position:absolute;left:904px;top:405px;width:1px;height:54px;background:#dde8f5"></div>
<div style="position:absolute;left:964px;top:405px;width:1px;height:54px;background:#dde8f5"></div>
<div style="position:absolute;left:27px;top:438px;width:981px;height:1px;background:#e2ebf6"></div>
<div class="t" style="left:30px;top:408px;">Open</div>
<div class="t" style="left:95px;top:408px;">Pick</div>
<div class="t" style="left:154px;top:408px;letter-spacing:-0.5px">06A01R2S1B</div>
<div class="t" style="left:284px;top:408px;letter-spacing:-0.6px">A0001</div>
<div class="t" style="left:354px;top:408px;">HDMI 6' Cables</div>
<div class="t" style="left:440px;top:408px;width:200px;text-align:right;letter-spacing:-0.6px">9.00</div>
<div class="t" style="left:539px;top:408px;width:200px;text-align:right;letter-spacing:-0.6px">9.00</div>
<div class="t" style="left:748px;top:408px;">pcs</div>
<div class="t" style="left:969px;top:408px;">SO Pick</div>
<div style="position:absolute;left:856px;top:407px;width:11px;height:11px;box-sizing:border-box;border:1px solid #b8b8b8;background:#fff"></div>
<div style="position:absolute;left:929px;top:407px;width:11px;height:11px;box-sizing:border-box;border:1px solid #c4c4c4;background:#fff"></div>
<svg style="left:931px;top:409px" width="7" height="7" viewBox="0 0 7 7"><path d="M0.5 3.5 L2.8 5.8 L6.5 1" stroke="#a8a8a8" stroke-width="1.2" fill="none"/></svg>
<div class="t" style="left:30px;top:425px;">Open</div>
<div class="t" style="left:95px;top:425px;">Put</div>
<div class="t" style="left:154px;top:425px;letter-spacing:-0.5px">Pack</div>
<div class="t" style="left:284px;top:425px;letter-spacing:-0.6px">A0001</div>
<div class="t" style="left:354px;top:425px;">HDMI 6' Cables</div>
<div class="t" style="left:440px;top:425px;width:200px;text-align:right;letter-spacing:-0.6px">9.00</div>
<div class="t" style="left:539px;top:425px;width:200px;text-align:right;letter-spacing:-0.6px">9.00</div>
<div class="t" style="left:748px;top:425px;">pcs</div>
<div class="t" style="left:969px;top:425px;">SO Pick</div>
<div style="position:absolute;left:856px;top:424px;width:11px;height:11px;box-sizing:border-box;border:1px solid #b8b8b8;background:#fff"></div>
<div style="position:absolute;left:929px;top:424px;width:11px;height:11px;box-sizing:border-box;border:1px solid #c4c4c4;background:#fff"></div>
<svg style="left:931px;top:426px" width="7" height="7" viewBox="0 0 7 7"><path d="M0.5 3.5 L2.8 5.8 L6.5 1" stroke="#a8a8a8" stroke-width="1.2" fill="none"/></svg>
</body></html>
